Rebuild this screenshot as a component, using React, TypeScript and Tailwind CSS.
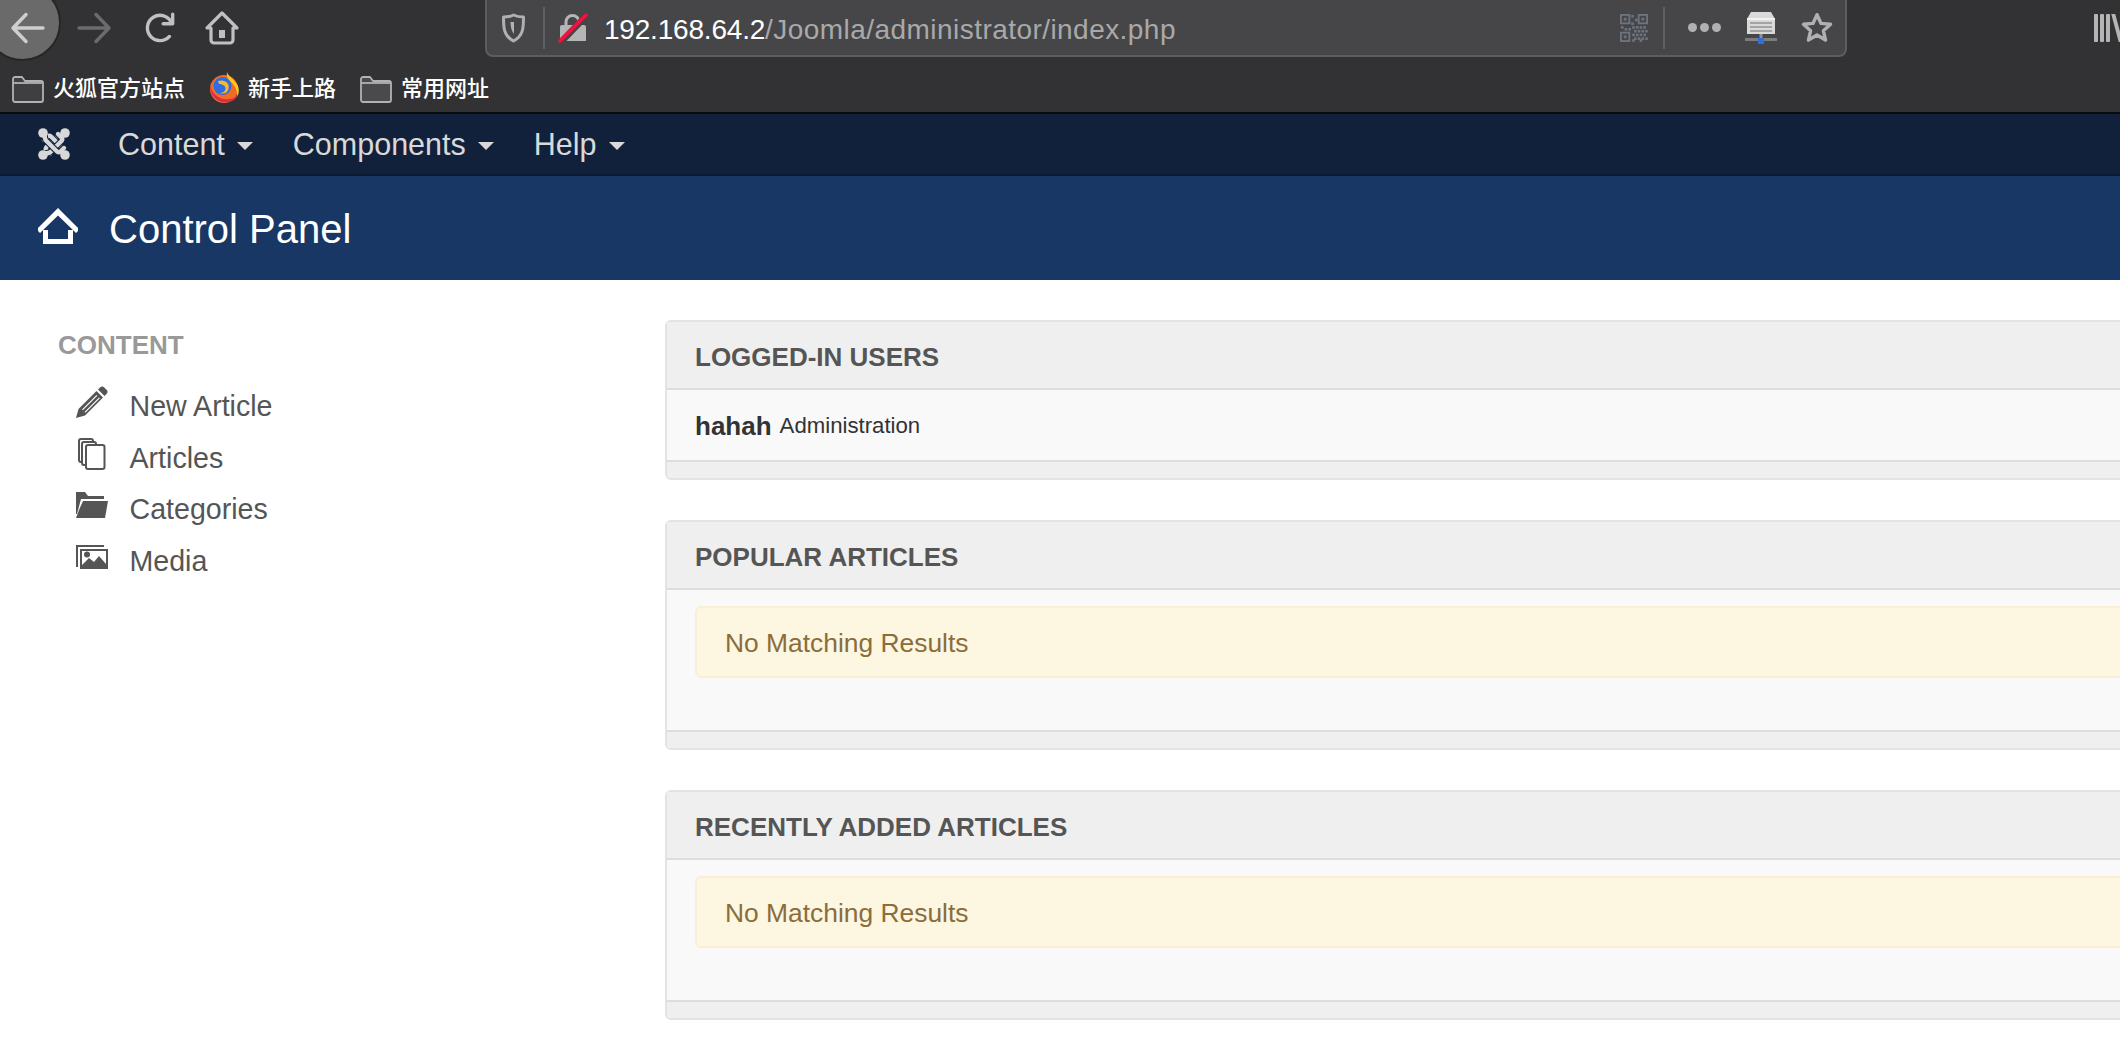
const sans = { fontFamily: '"Liberation Sans", Arial, sans-serif' };

function Back() {
  return (
    <svg width="36" height="36" viewBox="0 0 36 36" fill="none" stroke="#cfcfd0" strokeWidth="3.4" strokeLinecap="round" strokeLinejoin="round">
      <path d="M3 18h30M16 4.500 3 18l13 13.500" />
    </svg>
  );
}
function Forward() {
  return (
    <svg width="36" height="36" viewBox="0 0 36 36" fill="none" stroke="#6b6b6c" strokeWidth="3.4" strokeLinecap="round" strokeLinejoin="round">
      <path d="M3 18h30M20 4.500 33 18 20 31.500" />
    </svg>
  );
}
function Reload() {
  return (
    <svg width="38" height="38" viewBox="0 0 36 36" fill="none" stroke="#c0c0c1" strokeWidth="3.2" strokeLinecap="round" strokeLinejoin="round">
      <path d="M27 26a12 12 0 1 1 2-13" />
      <path d="M30 5v9h-9" />
    </svg>
  );
}
function Home() {
  return (
    <svg width="36" height="36" viewBox="0 0 36 36" fill="none" stroke="#c0c0c1" strokeWidth="3.2" strokeLinejoin="round" strokeLinecap="round">
      <path d="M3 18 18 3l15 15h-4v12a3 3 0 0 1-3 3H10a3 3 0 0 1-3-3V18Z" />
      <rect x="15" y="20" width="6" height="8" fill="#c0c0c1" stroke="none" />
    </svg>
  );
}
function Shield() {
  return (
    <svg width="25" height="30" viewBox="0 0 24 30" fill="none" stroke="#b0b0b1" strokeWidth="3" strokeLinejoin="round">
      <path d="M12 2c3 1.500 6 2 10 2 0 10 0 19-10 24C2 23 2 14 2 4c4 0 7-.5 10-2Z" />
      <path d="M9 9h3.500v12C10 18 9 14 9 9Z" fill="#b0b0b1" stroke="none" />
    </svg>
  );
}
function Lock() {
  return (
    <svg width="30" height="30" viewBox="0 0 30 30" fill="none">
      <path d="M8 12V9a6.500 6.500 0 0 1 13 0v3" stroke="#b5b5b6" strokeWidth="3" />
      <path d="M4 12h22a2 2 0 0 1 2 2v14H4a2 2 0 0 1-2-2V14a2 2 0 0 1 2-2Z" fill="#b5b5b6" />
      <path d="M3 29 29 2" stroke="#464648" strokeWidth="6.500" />
      <path d="M2 28 28 2" stroke="#f5103f" strokeWidth="3.400" strokeLinecap="round" />
    </svg>
  );
}
function Qr() {
  const cells: [number, number][] = [[12, 1], [16, 5], [12, 9], [13, 13], [17, 13], [21, 13], [25, 13], [1, 13], [5, 15], [9, 15], [15, 17], [19, 17], [23, 17], [27, 17], [13, 21], [17, 21], [21, 21], [25, 21], [15, 25], [19, 25], [23, 25], [27, 25], [13, 27], [21, 27]];
  return (
    <svg width="28" height="30" viewBox="0 0 30 30" fill="#6c7480">
      {[[1, 1], [20, 1], [1, 20]].map(([x, y]) => (
        <g key={`${x}-${y}`}>
          <rect x={x} y={y} width="9" height="9" fill="none" stroke="#6c7480" strokeWidth="2" />
          <rect x={x + 3} y={y + 3} width="3" height="3" />
        </g>
      ))}
      {cells.map(([x, y]) => (
        <rect key={`${x}-${y}`} x={x} y={y} width="2.800" height="2.800" />
      ))}
    </svg>
  );
}
function Drive() {
  return (
    <svg width="32" height="32" viewBox="0 0 32 32">
      <path d="M6 0h20l4 7v15H2V7l4-7Z" fill="#d9d9d9" />
      <path d="M2 6h28v2H2Z" fill="#f2f2f2" />
      <path d="M5 10h22v2H5Zm0 4h22v2H5Zm0 4h22v2H5Z" fill="#a4a4a4" />
      <path d="M0 26h32v3H0Z" fill="#7d7d7e" />
      <rect x="14.500" y="22" width="3" height="5" fill="#8f8f8f" />
      <rect x="13" y="26" width="6" height="6" fill="#2f6fd8" />
    </svg>
  );
}
function Star() {
  return (
    <svg width="32" height="32" viewBox="0 0 30 30" fill="none" stroke="#b0b0b1" strokeWidth="3.200" strokeLinejoin="round">
      <path d="m15 2.500 3.800 8.200 8.900.8-6.700 6 2 8.800-8-4.700-8 4.700 2-8.800-6.700-6 8.900-.8L15 2.500Z" />
    </svg>
  );
}
function Folder({ fill }: { fill: string }) {
  return (
    <svg width="32" height="27" viewBox="0 0 32 27" fill={fill} stroke="#b2b2b3" strokeWidth="1.800" strokeLinejoin="round">
      <path d="M1 3a2 2 0 0 1 2-2h7l3 4h16a2 2 0 0 1 2 2v17a2 2 0 0 1-2 2H3a2 2 0 0 1-2-2V3Z" />
      <path d="M1 7h30" fill="none" />
    </svg>
  );
}
function Firefox() {
  return (
    <svg width="30" height="31" viewBox="0 0 30 31">
      <circle cx="15" cy="17" r="14" fill="#f26b25" />
      <path d="M18 0c1 4 7 7 10.500 13 2 4 1.500 9-.5 12 .5-6-1-10-5-14-3-3-6-6-5-11Z" fill="#ffc81f" />
      <circle cx="13.500" cy="14" r="9" fill="#2a6ee0" />
      <path d="M9 9c7-2 12 2 10.500 8-1 4-5 5.500-9 4 3 0 6-1.500 6-4.500S13 12 10 12L9 9Z" fill="#ffb52b" />
      <path d="M1 14c0 11 9 18 19 16 4-1 7-3 9-7-4 4-9 5-14 4C8 26 3 21 1 14Z" fill="#e0294f" />
    </svg>
  );
}
function JoomlaLogo() {
  const arms = [0, 90, 180, 270];
  return (
    <svg width="32" height="32" viewBox="0 0 32 32" fill="none" strokeLinecap="round" strokeLinejoin="round">
      {arms.map((a) => (
        <g key={a} transform={`rotate(${a} 16 16)`}>
          <path d="M26 6 20 7.500 8.500 19q-1.500 2 0 3.500L12 26" stroke="#11213c" strokeWidth="6.600" />
          <path d="M26 6 20 7.500 8.500 19q-1.500 2 0 3.500L12 26" stroke="#d8d8d8" strokeWidth="4.400" />
        </g>
      ))}
      {arms.map((a) => (
        <circle key={a} cx="27" cy="5" r="4.800" fill="#d8d8d8" transform={`rotate(${a} 16 16)`} />
      ))}
    </svg>
  );
}
function HouseBig() {
  return (
    <svg width="40" height="36" viewBox="0 0 40 36" fill="#fff">
      <path d="M20 0 40 20v3l-2 2L20 7.500 2 25l-2-2v-3L20 0Z" />
      <path d="M5 22h5v9h20v-9h5v14H5V22Z" />
    </svg>
  );
}
function Pencil() {
  return (
    <svg width="32" height="32" viewBox="0 0 32 32" fill="#555">
      <path d="M24 1.500a3 3 0 0 1 4.300 0l2.200 2.200a3 3 0 0 1 0 4.300l-2 2-6.500-6.500 2-2Z" />
      <path fillRule="evenodd" d="M20.500 5 27 11.500 9 29.500 0 32l2.500-9L20.500 5ZM20.500 9 6 23.500l.8.8L21.300 9.800 20.500 9Zm2.500 2.500L8.500 26l.8.8L23.800 12.300l-.8-.8Z" />
    </svg>
  );
}
function Copy() {
  return (
    <svg width="32" height="32" viewBox="0 0 32 32" fill="none" stroke="#555" strokeWidth="2">
      <path d="M6 24H5a2 2 0 0 1-2-2V3a2 2 0 0 1 2-2h10a2 2 0 0 1 2 2v1" />
      <path d="M10 27H8a2 2 0 0 1-2-2V6a2 2 0 0 1 2-2h10a2 2 0 0 1 2 2v1" />
      <rect x="10" y="7" width="18.500" height="24" rx="2" />
    </svg>
  );
}
function FolderOpen() {
  return (
    <svg width="32" height="26" viewBox="0 0 32 26" fill="#555">
      <path d="M0 0h9l3 4h16v3H5L1 22H0V0Z" />
      <path d="M7 9h25l-3 17H0l3-8 4-9Z" />
    </svg>
  );
}
function Images() {
  return (
    <svg width="32" height="24" viewBox="0 0 32 24">
      <path d="M0 0h28v2H2v20H0V0Z" fill="#555" />
      <path fillRule="evenodd" d="M4 4h28v20H4V4Zm2 2v14l7-7 5 4 5-6 7 8V6H6Z" fill="#555" />
      <circle cx="11" cy="9.500" r="3" fill="#555" />
    </svg>
  );
}
function Caret() {
  return <span className="ml-[12px] mt-[2px] inline-block border-x-[8px] border-t-[8px] border-x-transparent border-t-[#d9d9d9]" />;
}

const sideItems = [
  { label: 'New Article', icon: <Pencil /> },
  { label: 'Articles', icon: <Copy /> },
  { label: 'Categories', icon: <FolderOpen /> },
  { label: 'Media', icon: <Images /> },
];

function Panel({ title, children }: { title: string; children: React.ReactNode }) {
  return (
    <section className="rounded-l-[6px] border-2 border-[#e3e3e3] bg-[#f9f9f9]">
      <h2 className="flex h-[68px] items-center border-b-2 border-[#dddddd] bg-[#efefef] px-[28px] pt-[5px] text-[26px] font-bold text-[#555555]">
        {title}
      </h2>
      {children}
      <div className="h-[18px] rounded-bl-[4px] border-t-2 border-[#dddddd] bg-[#efefef]" />
    </section>
  );
}

function NoResults() {
  return (
    <div className="px-[28px] pt-[16px] pb-[52px]">
      <div className="flex h-[72px] items-center rounded-[6px] border-2 border-[#fbeed5] bg-[#fdf6e1] px-[28px] pt-[3px] text-[26.400px] text-[#8a6d3b]">
        No Matching Results
      </div>
    </div>
  );
}

export default function App() {
  return (
    <div className="h-[1052px] w-[2120px] overflow-hidden bg-white" style={sans}>
      <div className="h-[114px] border-b-2 border-[#0a0b0d] bg-[#323234]">
        <div className="flex h-[63px] items-start">
          <div className="relative flex h-[56px] w-[485px] shrink-0 items-center">
            <div className="absolute left-[-16px] top-[-16px] h-[77px] w-[77px] rounded-full border-2 border-[#262627] bg-[#6a6a6b]" />
            <div className="relative ml-[10px]"><Back /></div>
            <div className="relative ml-[30px]"><Forward /></div>
            <div className="relative ml-[29px]"><Reload /></div>
            <div className="relative ml-[25px]"><Home /></div>
          </div>
          <div className="mt-[-2px] flex h-[59px] w-[1362px] shrink-0 items-center rounded-b-[8px] border-2 border-[#5d5d5f] bg-[#464648]">
            <div className="ml-[14px] flex"><Shield /></div>
            <div className="ml-[17px] h-[42px] w-[2px] bg-[#5c5f66]" />
            <div className="ml-[13px] flex"><Lock /></div>
            <div className="ml-[16px] whitespace-nowrap pt-[5px] text-[28px] tracking-[0.45px] text-[#a9a9aa]">
              <span className="tracking-[-0.2px] text-white">192.168.64.2</span>/Joomla/administrator/index.php
            </div>
            <div className="ml-auto flex items-center">
              <Qr />
              <div className="ml-[15px] h-[42px] w-[2px] bg-[#5c5f66]" />
              <div className="ml-[23px] flex gap-[3px]">
                <span className="h-[9px] w-[9px] rounded-full bg-[#b0b0b1]" />
                <span className="h-[9px] w-[9px] rounded-full bg-[#b0b0b1]" />
                <span className="h-[9px] w-[9px] rounded-full bg-[#b0b0b1]" />
              </div>
              <div className="ml-[24px] flex"><Drive /></div>
              <div className="ml-[24px] mr-[12px] flex"><Star /></div>
            </div>
          </div>
          <div className="ml-[247px] mt-[14px] flex h-[28px] shrink-0 gap-[2px]">
            <span className="h-full w-[4px] rounded-[1px] bg-[#b5b5b6]" />
            <span className="h-full w-[4px] rounded-[1px] bg-[#b5b5b6]" />
            <span className="h-full w-[4px] rounded-[1px] bg-[#b5b5b6]" />
            <span className="ml-[3px] h-full w-[4px] skew-x-[15deg] bg-[#b5b5b6]" />
          </div>
        </div>
        <div className="flex h-[49px] items-start pl-[12px] text-[22px] font-medium text-white" style={{ fontFamily: '"Noto Sans CJK SC", "Liberation Sans", sans-serif' }}>
          <div className="mt-[12px] flex items-center gap-[9px] whitespace-nowrap">
            <Folder fill="#3f3f41" />
            <span className="mt-[-5px]">火狐官方站点</span>
          </div>
          <div className="ml-[24px] mt-[9px] flex items-center gap-[9px] whitespace-nowrap">
            <Firefox />
            <span className="mt-[-3px]">新手上路</span>
          </div>
          <div className="ml-[24px] mt-[12px] flex items-center gap-[9px] whitespace-nowrap">
            <Folder fill="#4a4a4c" />
            <span className="mt-[-5px]">常用网址</span>
          </div>
        </div>
      </div>

      <nav className="flex h-[62px] items-center border-b-2 border-[#0a1830] bg-[#11213c] pl-[38px] text-[30.500px] text-[#d9d9d9]">
        <JoomlaLogo />
        <span className="ml-[48px] mt-[1px] flex items-center">Content<Caret /></span>
        <span className="ml-[40px] mt-[1px] flex items-center">Components<Caret /></span>
        <span className="ml-[40px] mt-[1px] flex items-center">Help<Caret /></span>
      </nav>

      <header className="flex h-[104px] items-center bg-[#193764] pl-[38px] text-[40px] text-white">
        <span className="mt-[-5px] flex"><HouseBig /></span>
        <h1 className="ml-[31px] mt-[1px]">Control Panel</h1>
      </header>

      <main className="flex items-start pt-[40px]">
        <aside className="w-[665px] shrink-0 pl-[58px] pt-[8px]">
          <h3 className="text-[26px] font-bold leading-[34px] text-[#999999]">CONTENT</h3>
          <ul className="mt-[19px] pl-[18px]">
            {sideItems.map((item) => (
              <li key={item.label} className="flex h-[51.500px] items-center text-[28.600px] text-[#555555]">
                <span className="mt-[-9px] flex w-[54px] shrink-0">{item.icon}</span>
                <span className="ml-[-0.5px]">{item.label}</span>
              </li>
            ))}
          </ul>
        </aside>
        <div className="flex w-[1500px] shrink-0 flex-col gap-[40px]">
          <Panel title="LOGGED-IN USERS">
            <div className="flex h-[70px] items-center gap-[8px] px-[28px] pt-[2px] text-[#333333]">
              <strong className="text-[26px]">hahah</strong>
              <span className="text-[22.200px]">Administration</span>
            </div>
          </Panel>
          <Panel title="POPULAR ARTICLES"><NoResults /></Panel>
          <Panel title="RECENTLY ADDED ARTICLES"><NoResults /></Panel>
        </div>
      </main>
    </div>
  );
}
